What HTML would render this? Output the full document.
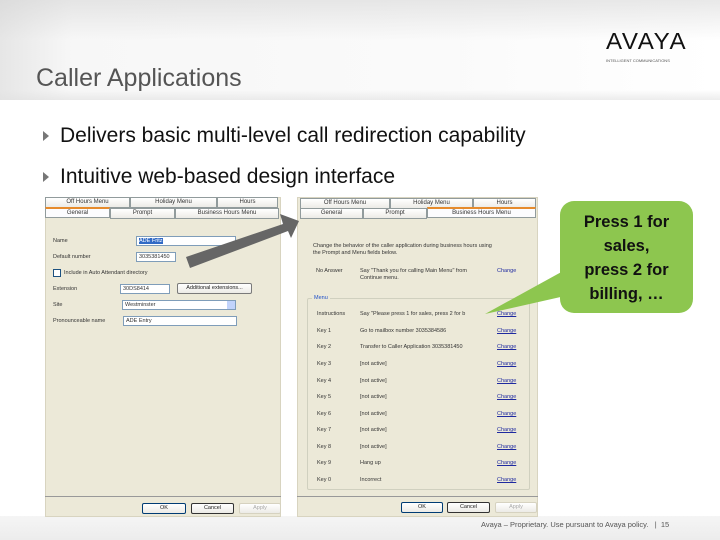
<!DOCTYPE html>
<html><head><style>
*{margin:0;padding:0;box-sizing:border-box}
body{width:720px;height:540px;position:relative;overflow:hidden;background:#fff;font-family:"Liberation Sans",sans-serif}
.hdr{position:absolute;left:0;top:0;width:720px;height:100px;background:linear-gradient(90deg,#e6e6e6 0%,#f7f7f7 10%,#fafafa 60%,#fff 100%)}
.hdr2{position:absolute;left:0;top:0;width:720px;height:100px;background:linear-gradient(180deg,rgba(210,210,210,.5) 0%,rgba(255,255,255,0) 40%,rgba(255,255,255,0) 90%,rgba(225,225,225,.6) 100%)}
.t{position:absolute;white-space:nowrap}
.ftr{position:absolute;left:0;top:516px;width:720px;height:24px;background:linear-gradient(180deg,#f5f5f5,#ececec)}
.dlg{position:absolute;background:#ECE9D8;border:1px solid #d8d4c0}
.tab{position:absolute;height:11px;border:1px solid #919b9c;background:linear-gradient(#fff,#ecebe6);font-size:6px;color:#333;text-align:center;line-height:9px}
.s{position:absolute;font-size:5.5px;color:#333;white-space:nowrap;line-height:7px}
.in{position:absolute;height:10px;background:#fff;border:1px solid #7f9db9;font-size:5.5px;line-height:8px;padding-left:2px;color:#333}
.btn{position:absolute;height:11px;border:1px solid #003c74;border-radius:2px;background:linear-gradient(#fff,#ecebe6);font-size:5.5px;text-align:center;line-height:9px;color:#222}
.lk{position:absolute;font-size:5.5px;color:#1f2aa0;text-decoration:underline;left:497px}
</style></head><body>
<div class="hdr"></div><div class="hdr2"></div>
<div class="t" style="left:36px;top:64px;font-size:25px;color:#555">Caller Applications</div>
<div class="t" style="left:606px;top:28px;font-size:23px;color:#111;letter-spacing:1.5px;transform:scaleX(1.05);transform-origin:left">AVAYA</div>
<div class="t" style="left:606px;top:58px;font-size:4px;color:#555">INTELLIGENT COMMUNICATIONS</div>
<div class="t" style="left:43px;top:131px;width:0;height:0;border-left:6px solid #777;border-top:5px solid transparent;border-bottom:5px solid transparent"></div>
<div class="t" style="left:60px;top:124px;font-size:21px;color:#111">Delivers basic multi-level call redirection capability</div>
<div class="t" style="left:43px;top:172px;width:0;height:0;border-left:6px solid #777;border-top:5px solid transparent;border-bottom:5px solid transparent"></div>
<div class="t" style="left:60px;top:165px;font-size:21px;color:#111">Intuitive web-based design interface</div>
<div class="ftr"></div>
<div class="t" style="left:481px;top:520px;font-size:7.5px;color:#555">Avaya – Proprietary. Use pursuant to Avaya policy.&nbsp;&nbsp;&nbsp;|&nbsp; 15</div>

<!-- left dialog -->
<div class="dlg" style="left:45px;top:197px;width:236px;height:320px"></div>
<div class="tab" style="left:45px;top:197px;width:85px">Off Hours Menu</div>
<div class="tab" style="left:130px;top:197px;width:87px">Holiday Menu</div>
<div class="tab" style="left:217px;top:197px;width:61px">Hours</div>
<div class="tab" style="left:45px;top:207px;width:65px;border-top:2px solid #e68b2c;background:#fcfcfe">General</div>
<div class="tab" style="left:110px;top:208px;width:65px">Prompt</div>
<div class="tab" style="left:175px;top:208px;width:104px">Business Hours Menu</div>
<div class="s" style="left:53px;top:238px">Name</div>
<div class="in" style="left:136px;top:236px;width:100px"><span style="background:#316ac5;color:#fff">ADE Fritz</span></div>
<div class="s" style="left:53px;top:254px">Default number</div>
<div class="in" style="left:136px;top:252px;width:40px">3035381450</div>
<div class="t" style="left:53px;top:269px;width:8px;height:8px;border:1px solid #1c5180;background:#fff"></div>
<div class="s" style="left:64px;top:270px">Include in Auto Attendant directory</div>
<div class="s" style="left:53px;top:286px">Extension</div>
<div class="in" style="left:120px;top:284px;width:50px">30DS8414</div>
<div class="btn" style="left:177px;top:283px;width:75px;border-color:#7a7a7a">Additional extensions...</div>
<div class="s" style="left:53px;top:302px">Site</div>
<div class="in" style="left:122px;top:300px;width:114px">Westminster</div>
<div class="t" style="left:227px;top:301px;width:8px;height:8px;background:#c1d3fb"></div>
<div class="s" style="left:53px;top:318px">Pronounceable name</div>
<div class="in" style="left:123px;top:316px;width:114px">ADE Entry</div>
<div class="t" style="left:45px;top:496px;width:236px;height:1px;background:#999"></div>
<div class="btn" style="left:142px;top:503px;width:44px">OK</div>
<div class="btn" style="left:191px;top:503px;width:43px;border-color:#333">Cancel</div>
<div class="btn" style="left:239px;top:503px;width:42px;border-color:#d6d2c0;color:#aaa">Apply</div>

<!-- right dialog -->
<div class="dlg" style="left:297px;top:197px;width:241px;height:320px"></div>
<div class="tab" style="left:300px;top:198px;width:90px">Off Hours Menu</div>
<div class="tab" style="left:390px;top:198px;width:83px">Holiday Menu</div>
<div class="tab" style="left:473px;top:198px;width:63px">Hours</div>
<div class="tab" style="left:300px;top:208px;width:63px">General</div>
<div class="tab" style="left:363px;top:208px;width:64px">Prompt</div>
<div class="tab" style="left:427px;top:207px;width:109px;border-top:2px solid #e68b2c;background:#fcfcfe">Business Hours Menu</div>
<div class="s" style="left:313px;top:243px">Change the behavior of the caller application during business hours using<br>the Prompt and Menu fields below.</div>
<div class="s" style="left:316px;top:268px">No Answer</div>
<div class="s" style="left:360px;top:268px">Say "Thank you for calling Main Menu" from<br>Continue menu.</div>
<div class="s" style="left:497px;top:268px;color:#1f2aa0">Change</div>
<div class="t" style="left:307px;top:298px;width:223px;height:192px;border:1px solid #d0d0bf;border-radius:2px"></div>
<div class="s" style="left:312px;top:295px;background:#ECE9D8;color:#1f50c8;padding:0 2px">Menu</div>
<div class="s" style="left:317px;top:311px">Instructions</div><div class="s" style="left:360px;top:311px">Say "Please press 1 for sales, press 2 for b</div><div class="lk" style="top:311px">Change</div>
<div class="s" style="left:317px;top:328px">Key 1</div><div class="s" style="left:360px;top:328px">Go to mailbox number 3035384586</div><div class="lk" style="top:328px">Change</div>
<div class="s" style="left:317px;top:344px">Key 2</div><div class="s" style="left:360px;top:344px">Transfer to Caller Application 3035381450</div><div class="lk" style="top:344px">Change</div>
<div class="s" style="left:317px;top:361px">Key 3</div><div class="s" style="left:360px;top:361px">[not active]</div><div class="lk" style="top:361px">Change</div>
<div class="s" style="left:317px;top:378px">Key 4</div><div class="s" style="left:360px;top:378px">[not active]</div><div class="lk" style="top:378px">Change</div>
<div class="s" style="left:317px;top:394px">Key 5</div><div class="s" style="left:360px;top:394px">[not active]</div><div class="lk" style="top:394px">Change</div>
<div class="s" style="left:317px;top:411px">Key 6</div><div class="s" style="left:360px;top:411px">[not active]</div><div class="lk" style="top:411px">Change</div>
<div class="s" style="left:317px;top:427px">Key 7</div><div class="s" style="left:360px;top:427px">[not active]</div><div class="lk" style="top:427px">Change</div>
<div class="s" style="left:317px;top:444px">Key 8</div><div class="s" style="left:360px;top:444px">[not active]</div><div class="lk" style="top:444px">Change</div>
<div class="s" style="left:317px;top:460px">Key 9</div><div class="s" style="left:360px;top:460px">Hang up</div><div class="lk" style="top:460px">Change</div>
<div class="s" style="left:317px;top:477px">Key 0</div><div class="s" style="left:360px;top:477px">Incorrect</div><div class="lk" style="top:477px">Change</div>
<div class="t" style="left:297px;top:496px;width:241px;height:1px;background:#999"></div>
<div class="btn" style="left:401px;top:502px;width:42px">OK</div>
<div class="btn" style="left:447px;top:502px;width:43px;border-color:#333">Cancel</div>
<div class="btn" style="left:495px;top:502px;width:42px;border-color:#d6d2c0;color:#aaa">Apply</div>

<svg class="t" style="left:0;top:0" width="720" height="540">
<polygon points="186,257 283,224 280,214 299,221 291,238 288,231 190,268" fill="#666"/>
<polygon points="485,314 565,270 565,296" fill="#8dc64f"/>
</svg>
<div class="t" style="left:560px;top:201px;width:133px;height:112px;background:#8dc64f;border-radius:14px;text-align:center;font-size:16.5px;font-weight:bold;color:#111;line-height:24px;padding-top:9px">Press 1 for<br>sales,<br>press 2 for<br>billing, …</div>
</body></html>
